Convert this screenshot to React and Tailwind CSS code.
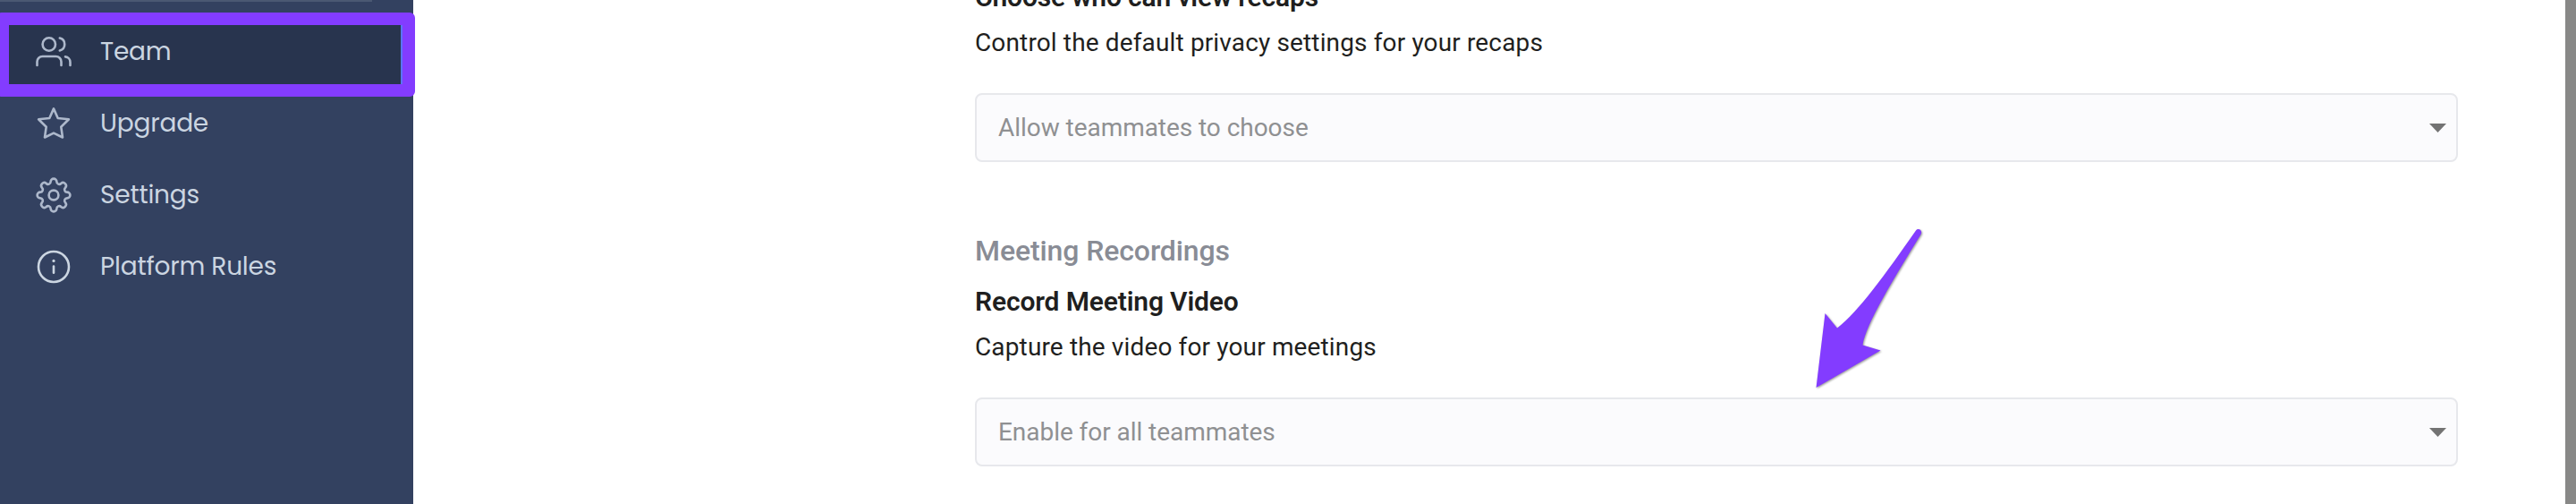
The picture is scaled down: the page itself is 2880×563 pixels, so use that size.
const stroke = {
  fill: "none",
  stroke: "currentColor",
  strokeWidth: 2.6,
  strokeLinecap: "round",
  strokeLinejoin: "round",
};

const TeamIcon = () => (
  <svg viewBox="0 0 48 48" className="size-12 text-[#adb8cb]" {...stroke}>
    <circle cx="18.8" cy="15.5" r="7.2" />
    <path d="M30.8 8.6a7.1 7.1 0 0 1 0 13.8" />
    <path d="M5.5 39v-4a6 6 0 0 1 6-6h15a6 6 0 0 1 6 6v4" />
    <path d="M37 29.4a6 6 0 0 1 5.5 6V39" />
  </svg>
);

const StarIcon = () => (
  <svg viewBox="0 0 48 48" className="size-12 text-[#adb8cb]" {...stroke}>
    <path d="M24 7.4L28.7 18l12.2 1.3-8.6 8.4 1.7 11.8L24 34.6l-10 4.9 1.7-11.8-8.6-8.4L19.3 18z" />
  </svg>
);

const GearIcon = () => (
  <svg viewBox="0 0 48 48" className="size-12 text-[#adb8cb]" {...stroke}>
    <circle cx="24" cy="24" r="5.4" />
    <path d="M20.6 9A3.4 3.4 0 0 1 27.4 9A2.8 2.8 0 0 0 32.2 11A3.4 3.4 0 0 1 37 15.8A2.8 2.8 0 0 0 39 20.6A3.4 3.4 0 0 1 39 27.4A2.8 2.8 0 0 0 37 32.2A3.4 3.4 0 0 1 32.2 37A2.8 2.8 0 0 0 27.4 39A3.4 3.4 0 0 1 20.6 39A2.8 2.8 0 0 0 15.8 37A3.4 3.4 0 0 1 11 32.2A2.8 2.8 0 0 0 9 27.4A3.4 3.4 0 0 1 9 20.6A2.8 2.8 0 0 0 11 15.8A3.4 3.4 0 0 1 15.8 11A2.8 2.8 0 0 0 20.6 9z" />
  </svg>
);

const InfoIcon = () => (
  <svg viewBox="0 0 48 48" className="size-12 text-[#cbd5e1]" {...stroke}>
    <circle cx="24" cy="24" r="17" />
    <path d="M24 23.6v7.2" />
    <circle cx="24" cy="17.4" r="1.6" fill="currentColor" stroke="none" />
  </svg>
);

const items = [
  { label: "Team", icon: TeamIcon, active: true },
  { label: "Upgrade", icon: StarIcon },
  { label: "Settings", icon: GearIcon },
  { label: "Platform Rules", icon: InfoIcon },
];

const Select = ({ value }) => (
  <div className="flex h-[77px] w-[1658px] items-center justify-between rounded-lg border-2 border-[#e7e8ec] bg-[#fbfbfd] pl-6 pr-[11px] text-[28px] tracking-[-0.05px] text-[#8f9092]">
    <span>{value}</span>
    <svg viewBox="0 0 19 10" className="h-[10px] w-[19px] fill-[#737373]">
      <path d="M0 0h19L9.5 10z" />
    </svg>
  </div>
);

const Setting = ({ title, description, value }) => (
  <>
    <h3 className="text-[30px] font-semibold leading-[34px] tracking-[-0.15px]">{title}</h3>
    <p className="mt-[17px] text-[28px] leading-[34px] tracking-[0.14px]">{description}</p>
    <div className="mt-[39px]">
      <Select value={value} />
    </div>
  </>
);

export default function App() {
  return (
    <div className="relative flex h-[563px] w-[2880px] overflow-hidden bg-white font-['Roboto',sans-serif]">
      <aside className="w-[462px] shrink-0 bg-[#334160]">
        <div className="h-[2px] w-[416px] bg-[#4a5873]" />
        <nav className="mt-4">
          {items.map(({ label, icon: Icon, active }) => (
            <div
              key={label}
              className={
                active
                  ? "flex h-20 w-[450px] items-center border-r-2 border-[#5b74f5] bg-[#28344e] pl-9"
                  : "flex h-20 items-center pl-9"
              }
            >
              <Icon />
              <span className="ml-7 font-['Poppins','Inter',sans-serif] text-[28px] tracking-[-0.2px] text-[#cbd5e1]">
                {label}
              </span>
            </div>
          ))}
        </nav>
      </aside>
      <main className="-mt-5 flex-1 pl-[628px] text-[#1f1f20]">
        <Setting
          title="Choose who can view recaps"
          description="Control the default privacy settings for your recaps"
          value="Allow teammates to choose"
        />
        <h2 className="mb-[21px] mt-20 text-[32px] font-medium leading-[38px] tracking-[-0.1px] text-[#898c95]">
          Meeting Recordings
        </h2>
        <Setting
          title="Record Meeting Video"
          description="Capture the video for your meetings"
          value="Enable for all teammates"
        />
      </main>
      <div className="w-3 shrink-0 bg-[#888887]" />
      {/* callouts drawn over the page */}
      <div className="absolute -left-1 top-[14px] h-[94px] w-[468px] rounded-md border-[14px] border-[#833cff]" />
      <svg
        viewBox="0 0 200 230"
        className="absolute left-[2000px] top-[230px] h-[230px] w-[200px] fill-[#833cff] drop-shadow-[1px_1px_1px_rgba(0,0,0,0.4)]"
      >
        <path d="M30.5 203 40.5 120 54 136.5C78 118 108 76 142 27.5 145 23.5 150 28 147.5 32 118 80 86 132 82.5 155.5L102.5 161.5z" />
      </svg>
    </div>
  );
}
